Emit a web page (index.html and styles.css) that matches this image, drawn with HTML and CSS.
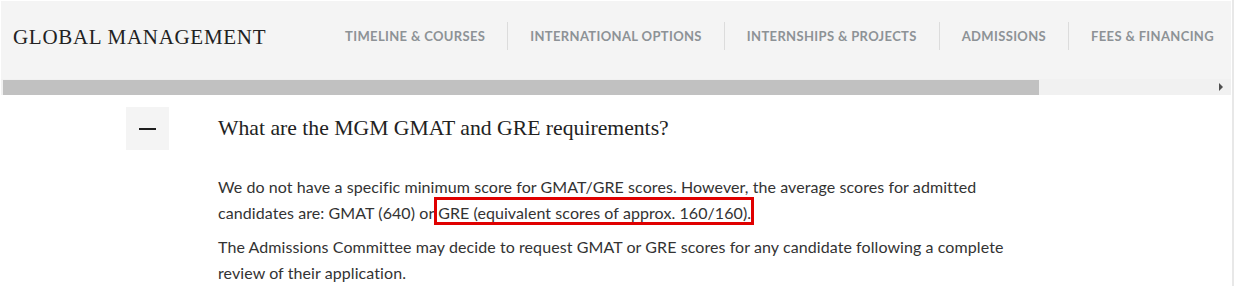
FILE: index.html
```html
<!DOCTYPE html>
<html lang="en">
<head>
    <meta charset="UTF-8">
    <meta name="viewport" content="width=device-width, initial-scale=1.0">
    <title>Global Management - Admissions FAQ</title>
    <link rel="stylesheet" href="styles.css">
</head>
<body>
    <div class="page">
        <header class="site-header">
            <div class="brand">GLOBAL MANAGEMENT</div>
            <nav class="main-nav">
                <a href="#">Timeline &amp; Courses</a>
                <a href="#">International Options</a>
                <a href="#">Internships &amp; Projects</a>
                <a href="#">Admissions</a>
                <a href="#">Fees &amp; Financing</a>
            </nav>
        </header>

        <!-- horizontal scroller under the nav -->
        <div class="hscroll">
            <div class="hscroll-thumb"></div>
            <div class="hscroll-arrow"></div>
        </div>

        <section class="faq">
            <div class="faq-head">
                <button class="toggle" aria-label="Collapse"><span></span></button>
                <h2>What are the MGM GMAT and GRE requirements?</h2>
            </div>
            <div class="faq-body">
                <p>We do not have a specific minimum score for GMAT/GRE scores. However, the average scores for admitted candidates are: GMAT (640) or <span class="mark">GRE (equivalent scores of approx. 160/160).</span></p>
                <p>The Admissions Committee may decide to request GMAT or GRE scores for any candidate following a complete review of their application.</p>
            </div>
        </section>
    </div>
    <div class="vscroll"></div>
</body>
</html>
```

FILE: styles.css
```css
html, body {
    margin: 0;
    padding: 0;
    background: #fff;
    height: 100%;
    overflow: hidden;
}
body {
    display: flex;
    font-family: 'Lato', sans-serif;
    color: #333;
}
.page {
    width: 1230px;
    padding: 1px 0 0 1px;
}
.vscroll {
    width: 2px;
    margin-left: 1px;
    background: #e8e8e8;
}
.site-header {
    display: flex;
    align-items: center;
    height: 78px;
    padding-bottom: 8px;
    box-sizing: border-box;
    background: #f4f4f4;
}
.brand {
    font-family: 'Liberation Serif', serif;
    font-size: 21px;
    letter-spacing: 0.7px;
    color: #222;
    padding-left: 12px;
    padding-top: 2px;
}
.main-nav {
    display: flex;
    margin-left: auto;
}
.main-nav a {
    padding: 7px 22px;
    font-size: 13px;
    font-weight: 700;
    letter-spacing: 0.35px;
    text-transform: uppercase;
    text-decoration: none;
    color: #8d9296;
    border-left: 1px solid #dcdcdc;
    line-height: 14px;
}
.main-nav a:first-child {
    border-left: none;
}
.main-nav a:last-child {
    padding-right: 17px;
}
.hscroll {
    display: flex;
    align-items: center;
    height: 16px;
    background: #f1f1f1;
    padding-left: 2px;
}
.hscroll-thumb {
    width: 1036px;
    height: 15px;
    background: #c1c1c1;
}
.hscroll-arrow {
    margin-left: auto;
    margin-right: 8px;
    width: 0;
    height: 0;
    border-top: 4px solid transparent;
    border-bottom: 4px solid transparent;
    border-left: 4px solid #505050;
}
.faq {
    padding: 12px 0 0 125px;
}
.faq-head {
    display: flex;
    align-items: center;
    gap: 49px;
}
.toggle {
    width: 43px;
    height: 43px;
    border: none;
    background: #f4f4f4;
    display: flex;
    align-items: center;
    justify-content: center;
    padding: 0;
}
.toggle span {
    display: block;
    width: 17px;
    height: 2px;
    background: #1e1e1e;
}
.faq-head h2 {
    margin: 0;
    font-family: 'Liberation Serif', serif;
    font-weight: normal;
    font-size: 21.7px;
    color: #222;
}
.faq-body {
    padding: 24px 0 0 92px;
    width: 800px;
}
.faq-body p {
    margin: 0 0 8px;
    font-size: 16px;
    line-height: 26px;
    letter-spacing: 0.08px;
}
/* red annotation box drawn over the highlighted phrase */
.mark {
    position: relative;
}
.mark::after {
    content: "";
    position: absolute;
    top: -6px;
    bottom: -3px;
    left: -4px;
    right: -3px;
    border: 3px solid #e00000;
    pointer-events: none;
}
```
